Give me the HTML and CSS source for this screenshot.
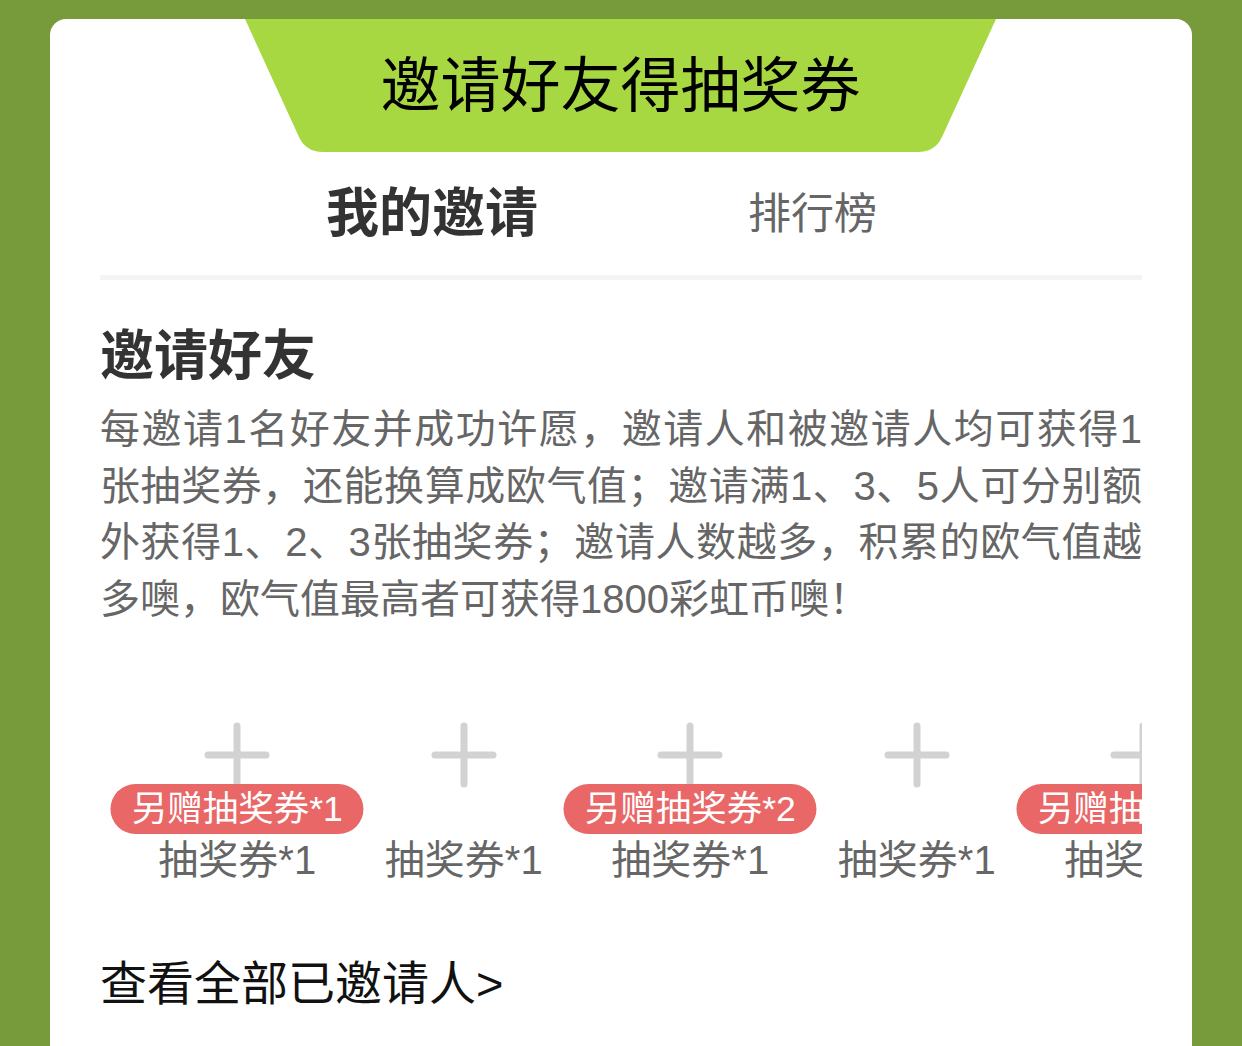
FILE: index.html
```html
<!DOCTYPE html>
<html lang="zh-CN">
  <head>
    <meta charset="UTF-8" />
    <meta name="viewport" content="width=device-width, initial-scale=1.0" />
    <title>邀请好友得抽奖券</title>
    <link rel="stylesheet" href="styles.css">
  </head>
  <body>
    <div class="card">
      <div class="banner">
        <svg class="banner-bg" width="751" height="133" viewBox="0 0 751 133">
          <path d="M0 0 H751 L697 118 Q690 133 673 133 H78 Q61 133 54 118 Z" fill="#a8d841" />
        </svg>
        <h1 class="banner-title">邀请好友得抽奖券</h1>
      </div>

      <div class="tabs">
        <div class="tab active">我的邀请</div>
        <div class="tab">排行榜</div>
      </div>

      <h2 class="h2">邀请好友</h2>
      <p class="desc">每邀请1名好友并成功许愿，邀请人和被邀请人均可获得1张抽奖券，还能换算成欧气值；邀请满1、3、5人可分别额外获得1、2、3张抽奖券；邀请人数越多，积累的欧气值越多噢，欧气值最高者可获得1800彩虹币噢！</p>

      <div class="slots">
        <div class="slot">
          <svg class="plus" width="66" height="66" viewBox="0 0 66 66"><path d="M33 4 V62 M4 33 H62" stroke="#d2d2d2" stroke-width="7" stroke-linecap="round" /></svg>
          <span class="bonus">另赠抽奖券*1</span>
          <div class="reward">抽奖券*1</div>
        </div>
        <div class="slot">
          <svg class="plus" width="66" height="66" viewBox="0 0 66 66"><path d="M33 4 V62 M4 33 H62" stroke="#d2d2d2" stroke-width="7" stroke-linecap="round" /></svg>
          <div class="reward">抽奖券*1</div>
        </div>
        <div class="slot">
          <svg class="plus" width="66" height="66" viewBox="0 0 66 66"><path d="M33 4 V62 M4 33 H62" stroke="#d2d2d2" stroke-width="7" stroke-linecap="round" /></svg>
          <span class="bonus">另赠抽奖券*2</span>
          <div class="reward">抽奖券*1</div>
        </div>
        <div class="slot">
          <svg class="plus" width="66" height="66" viewBox="0 0 66 66"><path d="M33 4 V62 M4 33 H62" stroke="#d2d2d2" stroke-width="7" stroke-linecap="round" /></svg>
          <div class="reward">抽奖券*1</div>
        </div>
        <div class="slot">
          <svg class="plus" width="66" height="66" viewBox="0 0 66 66"><path d="M33 4 V62 M4 33 H62" stroke="#d2d2d2" stroke-width="7" stroke-linecap="round" /></svg>
          <span class="bonus">另赠抽奖券*3</span>
          <div class="reward">抽奖券*1</div>
        </div>
      </div>

      <a class="more" href="#">查看全部已邀请人&gt;</a>
    </div>
  </body>
</html>
```

FILE: styles.css
```css
* {
  margin: 0;
  padding: 0;
  box-sizing: border-box;
}

body {
  background-color: #779a3a;
  font-family: "Liberation Sans", "Noto Sans CJK SC", sans-serif;
  padding-top: 19px;
  overflow: hidden;
}

.card {
  background-color: #fff;
  width: 1142px;
  margin-left: 50px;
  min-height: 1100px;
  border-radius: 16px 16px 0 0;
  padding: 0 50px;
}

.banner {
  position: relative;
  width: 751px;
  height: 133px;
  margin-left: 145px;
  display: flex;
  align-items: center;
  justify-content: center;
}

.banner-bg {
  position: absolute;
  left: 0;
  top: 0;
}

.banner-title {
  position: relative;
  font-size: 60px;
  font-weight: 400;
  line-height: 70px;
  color: #000;
  margin-top: 2px;
}

.tabs {
  display: flex;
  gap: 210px;
  padding: 32px 0 31px 226px;
  border-bottom: 5px solid #f4f4f4;
}

.tab {
  font-size: 43px;
  line-height: 60px;
  color: #666;
}

.tab.active {
  font-size: 53px;
  font-weight: 700;
  color: #333;
}

.h2 {
  font-size: 54px;
  font-weight: 700;
  line-height: 60px;
  color: #333;
  margin-top: 46px;
}

.desc {
  font-size: 40px;
  line-height: 56.7px;
  color: #666;
  text-align: justify;
  margin-top: 15px;
}

.slots {
  display: flex;
  overflow: hidden;
  padding: 0 0 12px 24px;
  margin-top: 92px;
}

.slot {
  position: relative;
  flex-shrink: 0;
  width: 226.5px;
  display: flex;
  flex-direction: column;
  align-items: center;
}

.plus {
  display: block;
  margin-top: 2px;
}

.bonus {
  position: absolute;
  top: 64px;
  left: 50%;
  transform: translateX(-50%);
  height: 50px;
  padding: 0 21px;
  border-radius: 25px;
  background-color: #e96767;
  color: #fff;
  font-size: 35.5px;
  line-height: 50px;
  white-space: nowrap;
}

.reward {
  font-size: 40px;
  line-height: 56px;
  color: #666;
  margin-top: 44px;
  white-space: nowrap;
}

.more {
  display: block;
  font-size: 47px;
  line-height: 60px;
  color: #111;
  text-decoration: none;
  margin-top: 54px;
}
```
